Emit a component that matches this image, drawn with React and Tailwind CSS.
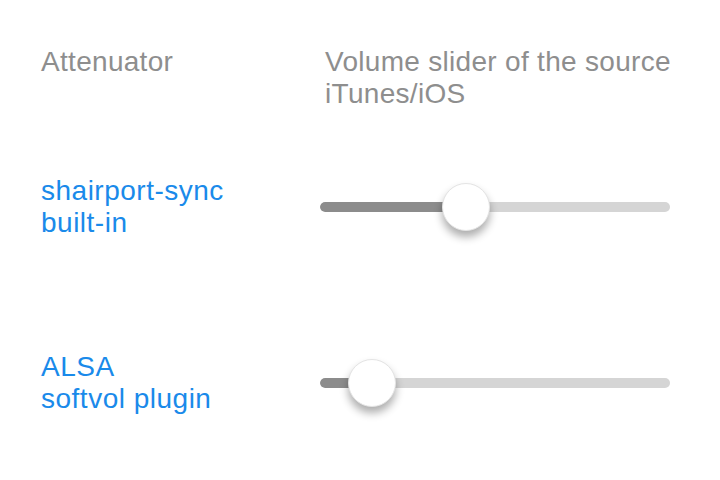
import React from "react";

function Slider({ value }) {
  return (
    <div className="relative w-[350px] h-[48px] flex items-center">
      <div className="relative w-full h-[10px] rounded-full bg-[#d5d5d5] overflow-hidden">
        <div className="h-full bg-[#8c8c8c] rounded-l-full" style={{ width: value }} />
      </div>
      <div
        className="absolute top-0 w-[48px] h-[48px] rounded-full bg-white border border-[#e4e4e4] shadow-[0_6px_9px_rgba(0,0,0,0.32)]"
        style={{ left: value - 24 }}
      />
    </div>
  );
}

export default function App() {
  return (
    <div
      className="w-[720px] h-[480px] bg-white overflow-hidden pt-[46px] pl-[41px] text-[28px] leading-[32px] tracking-[0.3px]"
      style={{ fontFamily: '"Liberation Sans", Arial, sans-serif' }}
    >
      <div className="flex">
        <div className="w-[279px] text-[#8e8e8e]">Attenuator</div>
        <div className="pl-[5px] text-[#8e8e8e]">
          Volume slider of the source
          <br />
          iTunes/iOS
        </div>
      </div>
      <div className="flex items-center mt-[65px]">
        <div className="w-[279px] text-[#1a8aea] tracking-[0.5px]">
          shairport-sync
          <br />
          built-in
        </div>
        <Slider value={146} />
      </div>
      <div className="flex items-center mt-[112px]">
        <div className="w-[279px] text-[#1a8aea] tracking-[0.5px]">
          ALSA
          <br />
          softvol plugin
        </div>
        <Slider value={52} />
      </div>
    </div>
  );
}
